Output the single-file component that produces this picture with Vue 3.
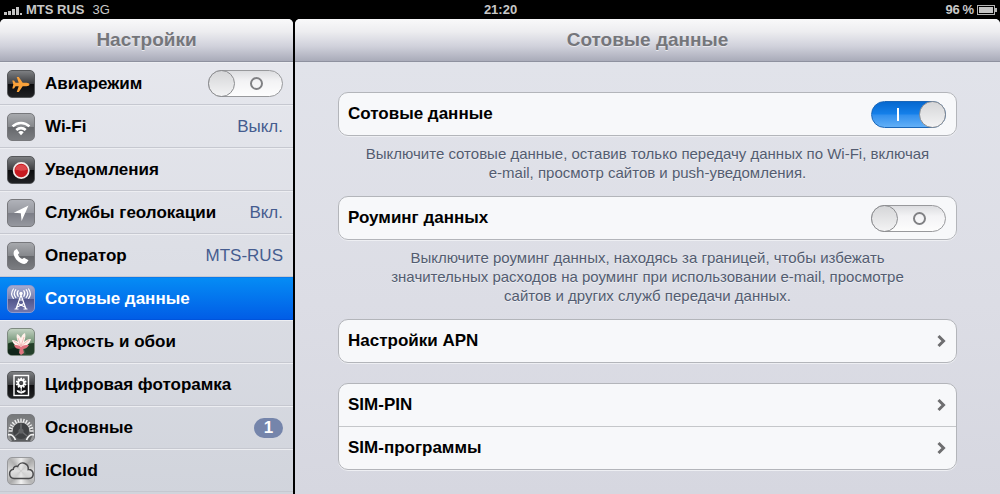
<script setup>
import {ref} from 'vue'
const airplane = ref(false);
const cellular = ref(true);
const roaming = ref(false);
const active = ref('cellular');
const items = [
  {id: 'wifi', title: 'Wi-Fi', value: 'Выкл.'},
  {id: 'notifications', title: 'Уведомления'},
  {id: 'location', title: 'Службы геолокации', value: 'Вкл.'},
  {id: 'carrier', title: 'Оператор', value: 'MTS-RUS'},
  {id: 'cellular', title: 'Сотовые данные'},
  {id: 'wallpaper', title: 'Яркость и обои'},
  {id: 'frame', title: 'Цифровая фоторамка'},
  {id: 'general', title: 'Основные', badge: 1},
  {id: 'icloud', title: 'iCloud'},
];
const teeth = Array.from({length: 13}, (_, i) => -90 + i * 15);
const petals = Array.from({length: 10}, (_, i) => i * 36);
</script>

<template>
  <div class="screen">
    <header class="status">
      <div class="status-side">
        <svg class="signal" width="19" height="10" viewBox="0 0 19 10">
          <path d="M0 7h3v3H0zM4 6h3v4H4zM8 4h3v6H8zM12 2h3v8h-3zM16 8h2v2h-2z" fill="#c4c4c4"/>
        </svg>
        <b>MTS RUS</b>
        <span class="net">3G</span>
      </div>
      <b>21:20</b>
      <div class="status-side right">
        <b>96&#8201;%</b>
        <svg width="20" height="10" viewBox="0 0 20 10">
          <rect x=".5" y=".5" width="17" height="9" fill="none" stroke="#b5b5b5"/>
          <rect x="2" y="2" width="14" height="6" fill="#c4c4c4"/>
          <path d="M18 3h2v4h-2z" fill="#b5b5b5"/>
        </svg>
      </div>
    </header>

    <div class="panes">
      <nav class="sidebar">
        <h1 class="bar">Настройки</h1>
        <ul class="menu">
          <li>
            <label class="item">
              <span class="icon black">
                <svg viewBox="0 0 28 28">
                  <path d="M22.500 14.500c0-1-1.500-1.700-3-1.700h-3.800L11.800 7H9.700l2 5.800H8.600L7 10.600H5.300l1 3.900-1 3.900H7l1.600-2.200h3.100L9.700 22h2.100l3.900-5.800h3.800c1.500 0 3-.7 3-1.700z" fill="#f9a13a"/>
                </svg>
              </span>
              <span class="title">Авиарежим</span>
              <input v-model="airplane" class="switch" type="checkbox">
            </label>
          </li>
          <li v-for="item in items" :key="item.id">
            <a class="item" :class="{active: item.id === active}" href="#" @click.prevent="active = item.id">
              <span class="icon" :class="item.id">
                <svg v-if="item.id === 'wifi'" viewBox="0 0 28 28">
                  <g fill="none" stroke="#fff" stroke-width="2.600">
                    <path d="M5.600 13.400a12 12 0 0 1 16.800 0"/>
                    <path d="M9.300 17a6.800 6.800 0 0 1 9.400 0"/>
                  </g>
                  <path d="M14 22.200l-2.700-2.900a3.800 3.800 0 0 1 5.400 0z" fill="#fff"/>
                </svg>
                <svg v-else-if="item.id === 'notifications'" viewBox="0 0 28 28">
                  <circle cx="14.200" cy="14.500" r="7.600" fill="#c71a20" stroke="#f3e9e7" stroke-width="1.700"/>
                  <path d="M8.200 13.500a6.200 6.200 0 0 1 12 0c-3 1.600-9 1.600-12 0z" fill="#dc474b"/>
                </svg>
                <svg v-else-if="item.id === 'location'" viewBox="0 0 28 28">
                  <path d="M21.500 6.500L14.600 22l-.8-7.800-7-.4z" fill="#fff"/>
                </svg>
                <svg v-else-if="item.id === 'carrier'" viewBox="0 0 28 28">
                  <path d="M7.200 8.700l2.600-2 2.600 4.200-1.500 1.700c.8 2 2.300 3.600 4.300 4.500l1.900-1.400 4.400 2.600-1.900 2.800c-1.200 1.200-3.600.9-5.800-.1-3.500-1.700-6.300-5-7.100-8.600-.2-1.300-.1-2.700.5-3.700z" fill="#fff"/>
                </svg>
                <svg v-else-if="item.id === 'cellular'" viewBox="0 0 28 28">
                  <g fill="none" stroke="#fff" stroke-width="1.200" stroke-linecap="round">
                    <path d="M14 10L9 24M14 10l5 14M12.300 15h3.400M11.300 18.500l6.300 3.500M16.700 18.500L10.400 22M8 24h3M17 24h3"/>
                    <path d="M11.200 5.700c-1.200 1.700-1.200 4 0 5.600M16.800 5.700c1.200 1.700 1.200 4 0 5.600M8.800 4.700c-1.900 2.400-1.900 5.400 0 7.800M19.200 4.700c1.900 2.400 1.900 5.400 0 7.800M6.400 4c-2.200 3-2.200 6.500 0 9.300M21.600 4c2.200 3 2.200 6.500 0 9.300"/>
                  </g>
                  <circle cx="14" cy="8.500" r="1.700" fill="#fff"/>
                </svg>
                <svg v-else-if="item.id === 'wallpaper'" viewBox="0 0 28 28">
                  <path d="M0 16c5-3 9-2 13 2l-2 7-11 1z" fill="#1c3a22"/>
                  <path d="M28 15c-5 0-9 1-12 4l3 7 9 0z" fill="#24402a"/>
                  <path d="M0 22l10-3 4 9H2z" fill="#11251a"/>
                  <path d="M14 19c-5 0-8-3-9-7 3 0 5 1 6 2-1-3-2-5-1-8 2 1 3 2 4 4 1-3 2-4 4-5 1 3 0 6-1 9 2-2 4-3 7-3-1 4-4 8-10 8z" fill="#fff0ea"/>
                  <path d="M14 18l-3-8M14 18l-7-5M14 18l3-9M14 18l8-6" stroke="#f0b3ae" stroke-width=".8"/>
                  <path d="M7 17c3 0 5 0 7 2 2-2 4-2 8-2-2 3-4 4-6 4l1 4-3 2-2-2 1-4c-3 0-5-1-6-4z" fill="#e0747f"/>
                </svg>
                <svg v-else-if="item.id === 'frame'" viewBox="0 0 28 28">
                  <rect x="7" y="4.500" width="14.500" height="20" fill="none" stroke="#fff" stroke-width="1.400"/>
                  <g fill="#fff">
                    <ellipse v-for="a in petals" :key="a" cx="14.200" cy="8.200" rx="1.100" ry="1.700" :transform="`rotate(${a} 14.2 12)`"/>
                  </g>
                  <circle cx="14.200" cy="12" r="2.900" fill="none" stroke="#fff" stroke-width="1.400"/>
                  <path d="M14.200 16v6.500M14.200 21.800c-1-1.600-2.200-2-4.200-2 .6 1.400 2.200 2 4.200 2zM14.200 21.800c1-1.600 2.200-2 4.200-2-.6 1.400-2.200 2-4.200 2z" fill="#fff" stroke="#fff"/>
                </svg>
                <svg v-else-if="item.id === 'general'" viewBox="0 0 28 28">
                  <path d="M2 20a12 12 0 0 1 24 0l-3 7H5z" fill="#5b5d5f"/>
                  <g stroke="#f1f1f1" stroke-width="1.400">
                    <path v-for="a in teeth" :key="a" d="M14 4.500v4" :transform="`rotate(${a} 14 17)`"/>
                  </g>
                  <path d="M5 17a9 9 0 0 1 18 0" fill="none" stroke="#cfcfcf"/>
                  <circle cx="14" cy="17" r="8" fill="#404244"/>
                  <path d="M14 17V9.500M14 17l-6 5M14 17l6 5" stroke="#6a6c6e" stroke-width="1.500"/>
                  <circle cx="14" cy="17" r="2.600" fill="#606264"/>
                  <path d="M1 21c3-1 6 1 7.500 5M27 21c-3-1-6 1-7.500 5" fill="none" stroke="#f1f1f1" stroke-width="1.800"/>
                </svg>
                <svg v-else viewBox="0 0 28 28">
                  <path d="M7.100 21.400a4.600 4.600 0 0 1-.8-9.100c.2-2.300 2.300-3.600 4.400-2.800 1.300-3 4.200-4.200 6.700-3.200 2.700 1 4.200 3.500 3.800 6.300 2.900-.3 5 1.700 5 4.400 0 2.600-1.800 4.400-4.300 4.400z" fill="#e2e2e2" fill-opacity=".6" stroke="#4b4b4d" stroke-width="1.500"/>
                </svg>
              </span>
              <span class="title">{{ item.title }}</span>
              <span v-if="item.value" class="value">{{ item.value }}</span>
              <span v-if="item.badge" class="badge">{{ item.badge }}</span>
            </a>
          </li>
        </ul>
      </nav>

      <main class="detail">
        <h2 class="bar">Сотовые данные</h2>
        <div class="content">
          <section>
            <div class="card">
              <label class="row">
                <span>Сотовые данные</span>
                <input v-model="cellular" class="switch" type="checkbox">
              </label>
            </div>
            <p class="note">
              Выключите сотовые данные, оставив только передачу данных по Wi-Fi, включая<br>
              e-mail, просмотр сайтов и push-уведомления.
            </p>
          </section>
          <section>
            <div class="card">
              <label class="row">
                <span>Роуминг данных</span>
                <input v-model="roaming" class="switch" type="checkbox">
              </label>
            </div>
            <p class="note">
              Выключите роуминг данных, находясь за границей, чтобы избежать<br>
              значительных расходов на роуминг при использовании e-mail, просмотре<br>
              сайтов и других служб передачи данных.
            </p>
          </section>
          <div class="card">
            <button class="row" type="button">
              <span>Настройки APN</span>
              <svg class="chevron" viewBox="0 0 9 14"><path d="M1.500 2l5 5-5 5"/></svg>
            </button>
          </div>
          <div class="card">
            <button v-for="name in ['SIM-PIN', 'SIM-программы']" :key="name" class="row" type="button">
              <span>{{ name }}</span>
              <svg class="chevron" viewBox="0 0 9 14"><path d="M1.500 2l5 5-5 5"/></svg>
            </button>
          </div>
        </div>
      </main>
    </div>
  </div>
</template>

<style>
body{
  margin:0;
  background:#000;
}
</style>

<style scoped>
*, *::before, *::after{
  box-sizing:border-box;
}
.screen{
  display:flex;
  flex-direction:column;
  min-height:100vh;
  background:#000;
  font-family:"Liberation Sans", Arial, sans-serif;
}
.status{
  display:flex;
  align-items:center;
  height:19px;
  padding:0 3px 0 4px;
  color:#c8c8c8;
  font-size:13px;
}
.status-side{
  flex:1;
  display:flex;
  align-items:center;
  gap:3px;
}
.status-side.right{
  justify-content:flex-end;
}
.net{
  margin-left:5px;
}
.panes{
  flex:1;
  display:grid;
  grid-template-columns:293px 1fr;
  gap:2px;
}
.sidebar, .detail{
  border-radius:5px 5px 0 0;
  overflow:hidden;
}
.sidebar{
  background:linear-gradient(#e8e9ef, #d1d4dc);
}
.detail{
  background:linear-gradient(#e2e4eb, #dcdde5 60%, #d6d7e0);
}
.bar{
  display:flex;
  align-items:center;
  justify-content:center;
  height:43px;
  margin:0;
  border-bottom:1px solid #8e919f;
  background:linear-gradient(#f9f9fa, #ededf0 30%, #d0d1db 65%, #a9abb9);
  color:#75767b;
  font-size:19px;
  font-weight:bold;
  text-shadow:0 1px 0 #e9e9ee;
}
.menu{
  margin:0;
  padding:0;
  list-style:none;
}
.item{
  display:flex;
  align-items:center;
  height:43px;
  padding:0 10px 0 7px;
  border-top:1px solid #edeef2;
  border-bottom:1px solid #c6c8d0;
  color:#000;
  font-size:17px;
  text-decoration:none;
}
.title{
  flex:1;
  margin-left:10px;
  font-weight:bold;
}
.value{
  color:#455c8f;
}
.item.active{
  border-color:#0a7cec #0a7cec #0054dc;
  background:linear-gradient(#058cf5, #015de6);
  color:#fff;
}
.icon{
  width:28px;
  height:28px;
  border:1px solid #77787c;
  border-radius:5px;
  overflow:hidden;
  background:linear-gradient(#a7a9ad, #85878b 50%, #66686c 50%, #7b7d81);
}
.icon svg{
  display:block;
  width:28px;
  height:28px;
  margin:-1px;
}
.icon.black, .icon.notifications, .icon.frame{
  border-color:#55575a;
  background:linear-gradient(#7d7f82, #3b3c3f 50%, #0c0c0e 50%, #202124);
}
.icon.location{
  background:linear-gradient(#b0b2b9, #96989f 50%, #7c7e87 50%, #96989f);
}
.icon.cellular{
  border-color:#8e98cc;
  background:linear-gradient(#a5abd0, #777eac 50%, #50558b 50%, #7478ac);
}
.icon.wallpaper{
  border-color:#7e8a80;
  background:linear-gradient(#c2d2c2, #668a6a 60%, #2d4a34);
}
.icon.general{
  background:linear-gradient(#76787a, #98999b);
}
.icon.icloud{
  border-color:#98999c;
  background:conic-gradient(#eee, #aaa 12%, #ddd 25%, #b5b5b5 38%, #f2f2f2 50%, #aaa 62%, #ddd 75%, #b0b0b0 88%, #eee);
}
.badge{
  min-width:29px;
  border-radius:10px;
  background:#7585ab;
  color:#fff;
  font-size:17px;
  font-weight:bold;
  line-height:20px;
  text-align:center;
}
.content{
  display:flex;
  flex-direction:column;
  gap:20px;
  padding:30px 43px 24px;
}
section{
  margin-bottom:-6px;
}
.card{
  border:1px solid #b3b5ba;
  border-radius:10px;
  overflow:hidden;
  background:#f7f8fa;
  box-shadow:0 1px 0 #eeeff3;
}
.row{
  display:flex;
  align-items:center;
  justify-content:space-between;
  width:100%;
  height:42px;
  padding:0 10px 0 9px;
  border:0;
  background:none;
  color:#000;
  font-family:inherit;
  font-size:17px;
  font-weight:bold;
  text-align:left;
}
.row + .row{
  height:43px;
  border-top:1px solid #c5c7ca;
}
.note{
  margin:8px 20px 0;
  color:#535c70;
  font-size:15px;
  line-height:19px;
  text-align:center;
  text-shadow:0 1px 0 #eceef3;
}
.chevron{
  width:9px;
  height:14px;
  fill:none;
  stroke:#6e6e70;
  stroke-width:3;
}
.switch{
  appearance:none;
  display:flex;
  align-items:center;
  justify-content:space-between;
  width:75px;
  height:27px;
  margin:0;
  border:1px solid #98999c;
  border-radius:14px;
  background:linear-gradient(#dcdde0, #f3f3f5 40%, #fdfdfd);
}
.switch::before{
  content:"";
  width:27px;
  height:27px;
  margin:-1px;
  border:1px solid #8b8c8f;
  border-radius:50%;
  background:linear-gradient(#d5d6d8, #f3f3f4);
}
.switch::after{
  content:"";
  width:13px;
  height:13px;
  margin-right:19px;
  border:2px solid #808184;
  border-radius:50%;
}
.switch:checked{
  flex-direction:row-reverse;
  border-color:#1a66b8;
  background:linear-gradient(#0668cf, #1580ea 48%, #318fee 52%, #62aff6);
}
.switch:checked::after{
  width:2px;
  margin:0 0 0 25px;
  border:0;
  border-radius:0;
  background:#fff;
}
</style>
